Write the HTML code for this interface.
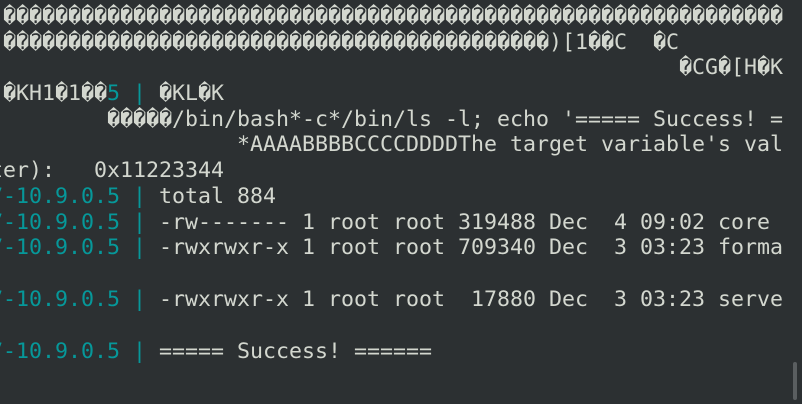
<!DOCTYPE html>
<html><head><meta charset="utf-8"><style>
html,body{margin:0;padding:0;background:#2c3032;width:802px;height:404px;overflow:hidden}
.t{position:absolute;left:0;top:0;width:802px;height:404px;overflow:hidden}
.l{position:absolute;white-space:pre;font-family:"DejaVu Sans Mono","Liberation Mono",monospace;font-size:21.6px;line-height:26px;color:#d3d7cf}
.c{color:#06989a}
.sb{position:absolute;left:793px;top:362px;width:4px;height:38px;background:#5a5e60;border-radius:2px}
</style></head><body><div class="t">
<div class="l" style="left:3px;top:4px">������������������������������������������������������������</div>
<div class="l" style="left:3px;top:30px">������������������������������������������)[1��C  �C</div>
<div class="l" style="left:679px;top:55px">�CG�[H�K</div>
<div class="l" style="left:3px;top:81px">�KH1�1��<span class="c">5 | </span>�KL�K</div>
<div class="l" style="left:107px;top:107px">�����/bin/bash*-c*/bin/ls -l; echo '===== Success! =</div>
<div class="l" style="left:237px;top:132px">*AAAABBBBCCCCDDDDThe target variable's val</div>
<div class="l" style="left:-10px;top:158px">ter):   0x11223344</div>
<div class="l" style="left:-10px;top:184px"><span class="c">7-10.9.0.5 | </span>total 884</div>
<div class="l" style="left:-10px;top:210px"><span class="c">7-10.9.0.5 | </span>-rw------- 1 root root 319488 Dec  4 09:02 core</div>
<div class="l" style="left:-10px;top:235px"><span class="c">7-10.9.0.5 | </span>-rwxrwxr-x 1 root root 709340 Dec  3 03:23 forma</div>
<div class="l" style="left:-10px;top:287px"><span class="c">7-10.9.0.5 | </span>-rwxrwxr-x 1 root root  17880 Dec  3 03:23 serve</div>
<div class="l" style="left:-10px;top:339px"><span class="c">7-10.9.0.5 | </span>===== Success! ======</div>
<div class="sb"></div>
</div></body></html>
